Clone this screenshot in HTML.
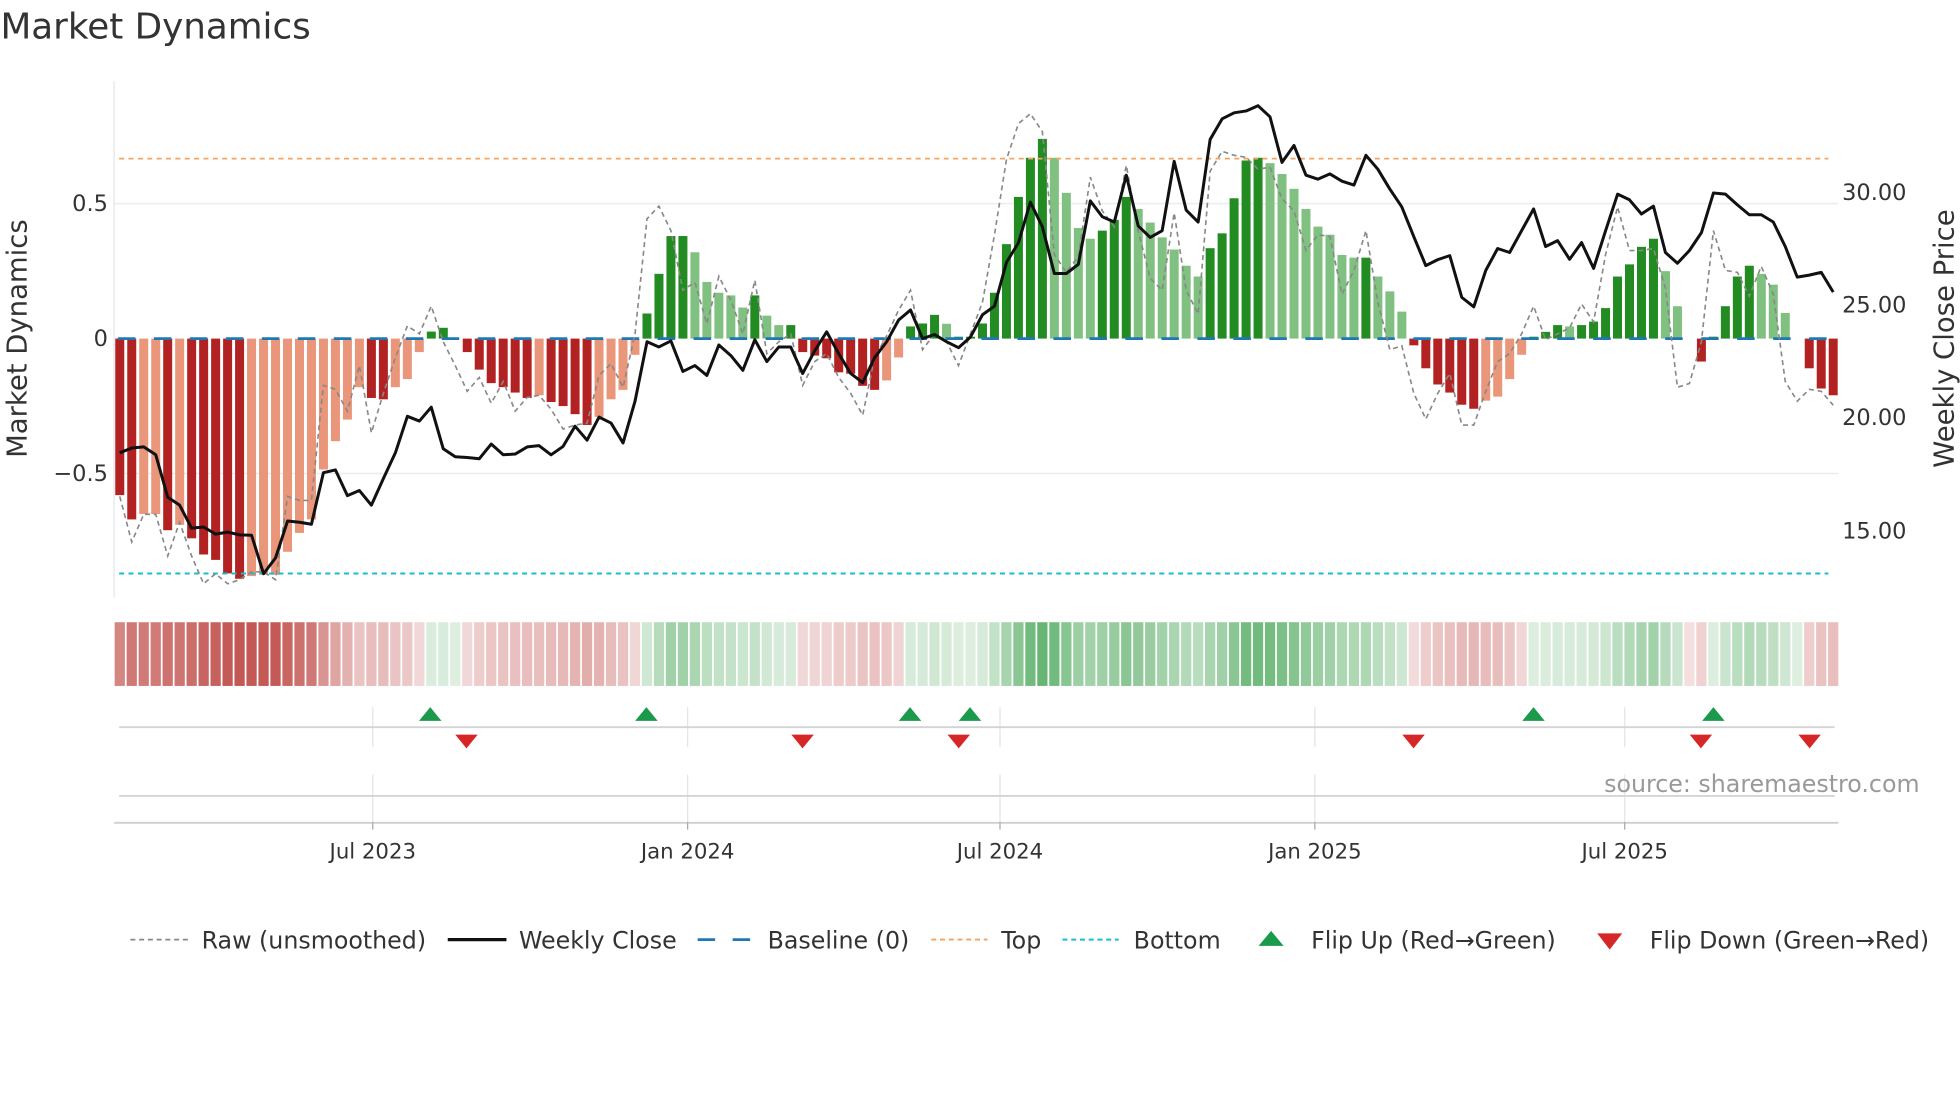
<!DOCTYPE html>
<html><head><meta charset="utf-8"><style>
html,body{margin:0;padding:0;background:#fff;}
svg{display:block;font-family:"DejaVu Sans","Liberation Sans",sans-serif;}
</style></head><body>
<svg id="s" width="1960" height="1102" viewBox="0 0 1568 882" xmlns="http://www.w3.org/2000/svg">
<rect width="1568" height="882" fill="#fff"/>
<text x="0" y="31" font-size="28.6" fill="#333">Market Dynamics</text>
<line x1="91" y1="65" x2="91" y2="478" stroke="#e6e6ea" stroke-width="1"/>
<line x1="91" y1="163" x2="1471" y2="163" stroke="#ececf0" stroke-width="1.2"/>
<line x1="91" y1="379" x2="1471" y2="379" stroke="#ececf0" stroke-width="1.2"/>
<g id="bars"></g>
<line x1="94" y1="271" x2="1466" y2="271" stroke="#1f77b4" stroke-width="2.2" stroke-dasharray="14 14.8"/>
<line x1="95" y1="127" x2="1463" y2="127" stroke="#f4a460" stroke-width="1.4" stroke-dasharray="4 3.5"/>
<line x1="95" y1="459" x2="1463" y2="459" stroke="#17becf" stroke-width="1.6" stroke-dasharray="4 3.5"/>
<polyline id="raw" fill="none" stroke="#888" stroke-width="1.3" stroke-dasharray="4 3"/>
<polyline id="px" fill="none" stroke="#111" stroke-width="2.4" stroke-linejoin="round"/>
<g font-size="18" fill="#333">
<text x="86" y="169" text-anchor="end">0.5</text>
<text x="86" y="277" text-anchor="end">0</text>
<text x="86" y="385" text-anchor="end">−0.5</text>
<text x="1474" y="160">30.00</text>
<text x="1474" y="250">25.00</text>
<text x="1474" y="340">20.00</text>
<text x="1474" y="431">15.00</text>
</g>
<text transform="translate(21,271) rotate(-90)" font-size="22" fill="#333" text-anchor="middle">Market Dynamics</text>
<text transform="translate(1563,271) rotate(-90)" font-size="22" fill="#333" text-anchor="middle">Weekly Close Price</text>
<g id="strip"></g>
<g stroke="#e4e4ea" stroke-width="1">
<line x1="298" y1="566" x2="298" y2="598"/><line x1="550" y1="566" x2="550" y2="598"/><line x1="800" y1="566" x2="800" y2="598"/><line x1="1052" y1="566" x2="1052" y2="598"/><line x1="1300" y1="566" x2="1300" y2="598"/>
<line x1="298" y1="620" x2="298" y2="658"/><line x1="550" y1="620" x2="550" y2="658"/><line x1="800" y1="620" x2="800" y2="658"/><line x1="1052" y1="620" x2="1052" y2="658"/><line x1="1300" y1="620" x2="1300" y2="658"/>
</g>
<line x1="95" y1="582" x2="1468" y2="582" stroke="#d4d4d4" stroke-width="1.5"/>
<line x1="95" y1="637" x2="1468" y2="637" stroke="#d4d4d4" stroke-width="1.5"/>
<line x1="91" y1="658.5" x2="1471" y2="658.5" stroke="#cfcfcf" stroke-width="1.5"/>
<g stroke="#aaa" stroke-width="1"><line x1="298" y1="658" x2="298" y2="664"/><line x1="550" y1="658" x2="550" y2="664"/><line x1="800" y1="658" x2="800" y2="664"/><line x1="1052" y1="658" x2="1052" y2="664"/><line x1="1300" y1="658" x2="1300" y2="664"/></g>
<g id="flips"></g>
<g font-size="17" fill="#333" text-anchor="middle">
<text x="298" y="687">Jul 2023</text><text x="550" y="687">Jan 2024</text><text x="800" y="687">Jul 2024</text><text x="1052" y="687">Jan 2025</text><text x="1300" y="687">Jul 2025</text>
</g>
<text x="1536" y="634" font-size="19" fill="#999" text-anchor="end">source: sharemaestro.com</text>
<g font-size="19" fill="#333">
<line x1="104" y1="752" x2="150" y2="752" stroke="#888" stroke-width="1.4" stroke-dasharray="4 3"/>
<text x="161" y="759">Raw (unsmoothed)</text>
<line x1="358" y1="752" x2="405" y2="752" stroke="#111" stroke-width="2.6"/>
<text x="415" y="759">Weekly Close</text>
<line x1="558" y1="752" x2="603" y2="752" stroke="#1f77b4" stroke-width="2.2" stroke-dasharray="14 14"/>
<text x="614" y="759">Baseline (0)</text>
<line x1="745" y1="752" x2="790" y2="752" stroke="#f4a460" stroke-width="1.5" stroke-dasharray="4 3"/>
<text x="801" y="759">Top</text>
<line x1="850" y1="752" x2="895" y2="752" stroke="#17becf" stroke-width="1.6" stroke-dasharray="4 3"/>
<text x="907" y="759">Bottom</text>
<polygon points="1007,757 1027,757 1017,745" fill="#1a9a4a"/>
<text x="1049" y="759">Flip Up (Red→Green)</text>
<polygon points="1278,747 1298,747 1288,760" fill="#d62728"/>
<text x="1320" y="759">Flip Down (Green→Red)</text>
</g>
</svg>
<script>
var V=[-0.58,-0.67,-0.65,-0.65,-0.71,-0.69,-0.74,-0.80,-0.82,-0.87,-0.89,-0.88,-0.875,-0.875,-0.79,-0.72,-0.67,-0.485,-0.38,-0.30,
-0.18,-0.22,-0.225,-0.18,-0.15,-0.05,0.026,0.04,0,-0.05,-0.115,-0.165,-0.18,-0.2,-0.22,-0.21,-0.235,-0.25,-0.28,-0.32,
-0.29,-0.225,-0.19,-0.06,0.093,0.24,0.38,0.38,0.32,0.21,0.17,0.16,0.115,0.16,0.085,0.05,0.05,-0.05,-0.063,-0.073,
-0.125,-0.13,-0.175,-0.19,-0.155,-0.07,0.045,0.056,0.088,0.055,0.007,0.007,0.056,0.17,0.35,0.525,0.67,0.74,0.67,0.54,
0.41,0.37,0.40,0.44,0.525,0.48,0.43,0.375,0.33,0.27,0.23,0.335,0.39,0.52,0.66,0.67,0.65,0.61,0.555,0.48,
0.415,0.385,0.31,0.30,0.30,0.23,0.175,0.10,-0.025,-0.11,-0.17,-0.2,-0.245,-0.26,-0.23,-0.215,-0.15,-0.06,0.007,0.025,
0.05,0.045,0.05,0.063,0.113,0.23,0.275,0.34,0.37,0.25,0.12,0,-0.085,0.007,0.12,0.23,0.27,0.24,0.2,0.095,
0,-0.11,-0.185,-0.21];
var D="DDLLDLDDDDDLLLLLLLLLLDDLLLDDDDDDDDDLDDDDLLLLDDDDLLLLLDLLDDDDDDDDLLDDDLDDDDDDDDLLLLDDDLLLLLLDDDDDLLLLLLLLDLLLDDDDDDLLLLDDDLDDDDDDDLLDDDDDDLLLDDDD";
var P=[940,928,925,945,1052,1072,1130,1127,1145,1140,1147,1148,1245,1205,1112,1115,1120,990,983,1048,
1035,1072,1005,940,848,860,825,930,950,952,955,918,945,943,925,922,945,924,873,908,
850,865,915,810,660,673,658,735,720,745,668,695,732,655,710,673,673,740,683,635,
690,740,763,700,660,605,580,652,642,660,675,648,592,570,460,410,308,370,488,488,
465,305,345,358,240,368,397,380,205,328,358,150,98,83,78,65,93,208,165,240,
250,237,255,265,190,225,275,320,395,468,453,443,548,572,480,425,435,380,325,420,
405,452,410,475,380,288,302,338,318,435,462,430,385,285,288,315,340,340,358,420,
497,492,485,535];
var R=[1050,1165,1095,1095,1200,1115,1200,1270,1245,1270,1260,1240,1240,1260,1050,1060,1060,770,780,835,
720,890,790,700,620,640,570,660,720,785,750,815,760,835,800,795,830,880,870,865,
745,715,775,640,350,318,380,530,510,615,495,555,640,505,690,660,640,770,710,690,
750,790,845,700,645,580,530,680,640,660,720,640,560,390,200,110,85,130,440,485,
445,245,330,370,215,380,500,530,335,530,590,230,180,190,195,225,220,300,330,430,
390,395,540,480,380,560,680,670,790,855,790,740,870,870,785,710,690,640,570,655,
640,625,565,610,440,320,430,430,425,525,775,765,660,380,480,485,545,470,540,760,
810,780,785,820];
var NS="http://www.w3.org/2000/svg";
function el(t,a,p){var e=document.createElementNS(NS,t);for(var k in a)e.setAttribute(k,a[k]);p.appendChild(e);return e;}
function X(i){return 95.5+9.59*i;}
var bars=document.getElementById('bars'),strip=document.getElementById('strip');
for(var i=0;i<144;i++){
 var v=V[i],x=X(i),y=271-216*v,dark=D[i]=='D';
 var col=v>=0?(dark?'#228b22':'#80c080'):(dark?'#b22222':'#e9967a');
 if(Math.abs(v)>0.001) el('rect',{x:x-3.6,y:Math.min(y,271),width:7.2,height:Math.abs(271-y),fill:col},bars);
 var s=v>0?1:(v<0?-1:0); if(s==0){s=(i==131)?-1:1;}
 var t=0.18+0.78*Math.min(1,Math.abs(v)/0.9);
 var b=s>0?[70,165,85]:[192,78,74];
 var c='rgb('+[0,1,2].map(function(k){return Math.round(255-(255-b[k])*t);}).join(',')+')';
 el('rect',{x:x-4.1,y:498,width:8.2,height:51,fill:c},strip);
}
var pp=[],rp=[];
for(var i=0;i<144;i++){pp.push(X(i).toFixed(1)+','+(64+P[i]/3.15).toFixed(1));rp.push(X(i).toFixed(1)+','+(64+R[i]/3.15).toFixed(1));}
document.getElementById('px').setAttribute('points',pp.join(' '));
document.getElementById('raw').setAttribute('points',rp.join(' '));
var f=document.getElementById('flips');
[344,517,728,776,1227,1371].forEach(function(x){el('polygon',{points:(x-9)+',577 '+(x+9)+',577 '+x+',566',fill:'#1a9a4a'},f);});
[373,642,767,1131,1361,1448].forEach(function(x){el('polygon',{points:(x-9)+',588 '+(x+9)+',588 '+x+',599',fill:'#d62728'},f);});
</script>
</body></html>
